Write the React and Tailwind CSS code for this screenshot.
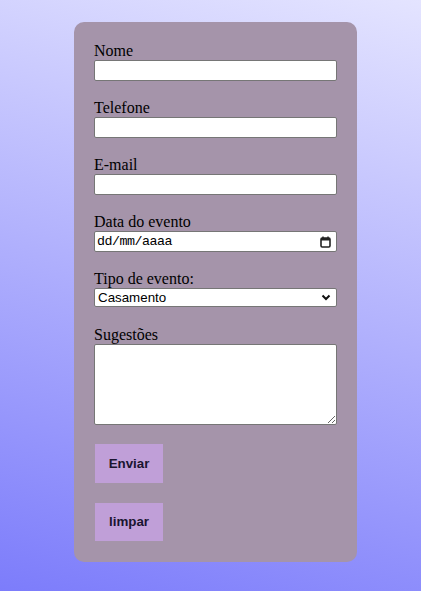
import React from "react";

function Label({ children }) {
  return (
    <label className="block text-[16px] leading-[18px] text-black">
      {children}
    </label>
  );
}

const inputCls =
  "block w-[243px] h-[21px] bg-white border border-[#767676] rounded-[2px] px-[2px] text-[13.33px] font-['Arial','Liberation_Sans',sans-serif] outline-none";

export default function App() {
  return (
    <div className="min-h-[591px] w-full bg-[linear-gradient(15deg,#7c7cfb,#e4e4ff)] pt-[22px] pb-[31px] font-['Liberation_Serif','Times_New_Roman',serif]">
      <div className="ml-[74px] w-[283px] rounded-[10px] bg-[#a594aa] px-[20px] pt-[20px] pb-[21px] flex flex-col">
        <Label>Nome</Label>
        <input type="text" className={inputCls} />
        <div className="h-[18px]" />
        <Label>Telefone</Label>
        <input type="text" className={inputCls} />
        <div className="h-[18px]" />
        <Label>E-mail</Label>
        <input type="text" className={inputCls} />
        <div className="h-[18px]" />
        <Label>Data do evento</Label>
        <div className="flex items-center justify-between w-[243px] h-[21px] bg-white border border-[#767676] rounded-[2px] pl-[2px] pr-[5px] text-[13.33px] font-['Liberation_Mono','DejaVu_Sans_Mono',monospace] text-black">
          <span className="tracking-[-0.5px]">dd/mm/aaaa</span>
          <svg width="11" height="12" viewBox="0 0 11 12" fill="none">
            <rect x="1" y="2" width="9" height="9" rx="1.2" stroke="#222" strokeWidth="1.6" />
            <rect x="1" y="2" width="9" height="2.5" fill="#222" />
            <line x1="3" y1="0.5" x2="3" y2="2.5" stroke="#222" strokeWidth="1.4" />
            <line x1="8" y1="0.5" x2="8" y2="2.5" stroke="#222" strokeWidth="1.4" />
          </svg>
        </div>
        <div className="h-[18px]" />
        <Label>Tipo de evento:</Label>
        <div className="relative w-[243px] h-[19px] bg-white border border-[#767676] rounded-[2px] flex items-center pl-[3px] text-[13.33px] font-['Arial','Liberation_Sans',sans-serif] text-black">
          <span>Casamento</span>
          <svg className="absolute right-[5px] top-[5px]" width="10" height="7" viewBox="0 0 10 7">
            <path d="M1.5 1.5 L5 5 L8.5 1.5" stroke="#111" strokeWidth="2" fill="none" />
          </svg>
        </div>
        <div className="h-[19px]" />
        <Label>Sugestões</Label>
        <textarea className="block w-[243px] h-[81px] bg-white border border-[#767676] rounded-[2px] p-[2px] text-[13.33px] font-['Liberation_Mono',monospace] outline-none" />
        <div className="h-[19px]" />
        <button className="ml-px w-[68px] h-[39px] bg-[#c09fd8] text-[#1a1530] font-bold text-[13.33px] font-['Arial','Liberation_Sans',sans-serif] self-start">
          Enviar
        </button>
        <div className="h-[20px]" />
        <button className="ml-px w-[68px] h-[38px] bg-[#c09fd8] text-[#1a1530] font-bold text-[13.33px] font-['Arial','Liberation_Sans',sans-serif] self-start">
          limpar
        </button>
      </div>
    </div>
  );
}
